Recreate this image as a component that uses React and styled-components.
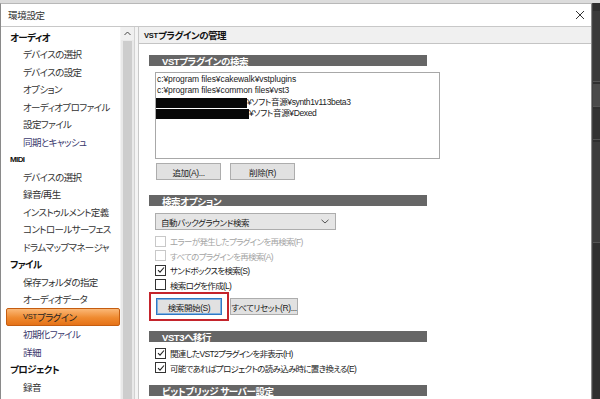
import styled, { createGlobalStyle } from 'styled-components'

const GlobalStyle = createGlobalStyle`
  html, body { margin: 0; padding: 0; background: #2a2a2a; }
  body {
    font-family: "Liberation Sans", "Noto Sans CJK JP", sans-serif;
    font-feature-settings: "palt";
    font-size: 9px;
    color: #222;
  }
`

const Screen = styled.div`
  width: 600px;
  height: 399px;
  overflow: hidden;
  display: flex;
  flex-direction: column;
  background: #2a2a2a;
`
const TopStrip = styled.div`
  height: 3px;
  background: #dcdcdc;
  flex: none;
`
const Row = styled.div`
  flex: 1;
  display: flex;
  min-height: 0;
`
const Dialog = styled.div`
  width: 590px;
  flex: none;
  display: flex;
  flex-direction: column;
  background: #fff;
  border-left: 1px solid #8a8a8a;
  border-right: 1px solid #8a8a8a;
  border-top: 1px solid #b8b8b8;
`
const TitleBar = styled.div`
  height: 22px;
  display: flex;
  align-items: center;
  justify-content: space-between;
  padding: 0 6px 0 7px;
  border-bottom: 1px solid #c8c8c8;
  flex: none;
`
const Title = styled.span`
  font-size: 9.5px;
  letter-spacing: -0.3px;
  color: #333;
`
const Body = styled.div`
  flex: 1;
  display: flex;
  min-height: 0;
`
const Nav = styled.div`
  width: 117px;
  flex: none;
  padding: 1px 0 0 2px;
  background: #fff;
`
const NavItem = styled.div`
  height: 17.5px;
  display: flex;
  align-items: center;
  white-space: nowrap;
  padding-left: ${p => (p.$group ? '7px' : '20px')};
  font-weight: ${p => (p.$group ? 700 : 400)};
  font-size: ${p => (p.$small ? '8px' : '9.5px')};
  letter-spacing: -0.6px;
  color: ${p => (p.$group ? '#111' : p.$navy ? '#3b3a6e' : '#333')};
  ${p => p.$selected && `
    margin: 0 0 0 3px;
    padding-left: 16px;
    border: 1px solid #c55d10;
    border-radius: 2px;
    background: linear-gradient(#fbb877, #ef8a2f 55%, #e57218);
    height: 15.5px;
    color: #222;
  `}
`
const Small = styled.span`
  font-size: 7.5px;
  letter-spacing: -0.2px;
`
const ScrollBar = styled.div`
  width: 13px;
  flex: none;
  display: flex;
  flex-direction: column;
  background: #e9e9e9;
  border-left: 1px solid #f4f4f4;
`
const ScrollArrow = styled.div`
  height: 13px;
  display: flex;
  align-items: center;
  justify-content: center;
  background: #f0f0f0;
`
const ScrollThumb = styled.div`
  flex: 1;
  margin: 1px 2px 0 2px;
  background: #cdcdcd;
`
const Split = styled.div`
  width: 3px;
  flex: none;
  background: #f4f4f4;
  border-left: 1px solid #d2d2d2;
  border-right: 1px solid #c8c8c8;
`
const Main = styled.div`
  flex: 1;
  display: flex;
  flex-direction: column;
  min-width: 0;
`
const MainHeader = styled.div`
  height: 16px;
  display: flex;
  align-items: center;
  padding-left: 5px;
  background: #f0f0f0;
  border-bottom: 1px solid #c4c4c4;
  font-weight: 700;
  font-size: 9.5px;
  letter-spacing: -0.5px;
  color: #111;
  flex: none;
`
const Content = styled.div`
  padding: 11px 0 0 10px;
  display: flex;
  flex-direction: column;
`
const SectionBar = styled.div`
  width: 265px;
  height: 11px;
  margin-top: ${p => p.$top || 0}px;
  padding-left: 13px;
  display: flex;
  align-items: center;
  white-space: nowrap;
  background: #666;
  color: #fff;
  font-weight: 700;
  font-size: 9.5px;
  letter-spacing: -0.4px;
`
const ListBox = styled.div`
  width: 282px;
  height: 84px;
  margin: 6px 0 0 6px;
  border: 1px solid #a8a8a8;
  padding: 1px 0 0 1px;
  font-size: 8.5px;
  line-height: 11.3px;
  letter-spacing: -0.1px;
  color: #222;
`
const ListLine = styled.div`
  display: flex;
  white-space: nowrap;
  letter-spacing: ${p => (p.$tight ? '-0.35px' : '-0.1px')};
`
const Redact = styled.span`
  display: inline-block;
  width: ${p => p.$w}px;
  height: 10px;
  margin: 1px 0 0 -1px;
  background: #080808;
`
const ButtonRow = styled.div`
  display: flex;
  gap: ${p => p.$gap ?? 9}px;
  margin: ${p => p.$margin || '4px 0 0 7px'};
  align-items: center;
`
const Button = styled.div`
  width: ${p => p.$w || 64}px;
  height: 15px;
  display: flex;
  align-items: center;
  justify-content: center;
  white-space: nowrap;
  background: #e1e1e1;
  border: 1px solid ${p => (p.$focus ? '#2f78c4' : '#adadad')};
  box-shadow: ${p => (p.$focus ? 'inset 0 0 0 1px #7fb0e0' : 'none')};
  font-size: 8.5px;
  letter-spacing: -0.4px;
  color: #222;
`
const Highlight = styled.div`
  border: 2px solid #c4242c;
  padding: 4px 5px;
  display: flex;
`
const Select = styled.div`
  box-sizing: border-box;
  width: 181px;
  height: 17px;
  margin: 7px 0 0 6px;
  border: 1px solid #adadad;
  background: #e5e5e5;
  display: flex;
  align-items: center;
  justify-content: space-between;
  padding: 0 6px 0 5px;
  font-size: 8.5px;
  letter-spacing: -0.4px;
  color: #222;
`
const CheckRow = styled.div`
  display: flex;
  align-items: center;
  gap: 4px;
  height: 14.5px;
  margin-left: 6px;
  white-space: nowrap;
  font-size: 8.5px;
  letter-spacing: -0.7px;
  color: ${p => (p.$disabled ? '#a4a4a4' : '#222')};
`
const Box = styled.span`
  width: 9px;
  height: 9px;
  flex: none;
  border: 1px solid ${p => (p.$disabled ? '#c8c8c8' : '#333')};
  background: #fff;
  display: flex;
  align-items: center;
  justify-content: center;
`
const Spacer = styled.div`
  height: ${p => p.$h}px;
`
const Side = styled.div`
  flex: 1;
  display: flex;
  flex-direction: column;
  background: #2f2f2f;
  border-left: 1px solid #444;
  padding-top: 8px;
  gap: 2px;
`
const SideBlock = styled.div`
  height: ${p => p.$h}px;
  background: ${p => p.$bg};
  border-bottom: 1px solid #555;
`

function Check({ checked, disabled, children }) {
  return (
    <CheckRow $disabled={disabled}>
      <Box $disabled={disabled}>
        {checked && (
          <svg width="8" height="8" viewBox="0 0 8 8">
            <path d="M1 4.2 L3 6.2 L7 1.5" fill="none" stroke="#222" strokeWidth="1.1" />
          </svg>
        )}
      </Box>
      {children}
    </CheckRow>
  )
}

const navItems = [
  { t: 'オーディオ', group: true },
  { t: 'デバイスの選択' },
  { t: 'デバイスの設定' },
  { t: 'オプション' },
  { t: 'オーディオプロファイル' },
  { t: '設定ファイル' },
  { t: '同期とキャッシュ', navy: true },
  { t: 'MIDI', group: true, small: true },
  { t: 'デバイスの選択' },
  { t: '録音/再生' },
  { t: 'インストゥルメント定義' },
  { t: 'コントロールサーフェス' },
  { t: 'ドラムマップマネージャ' },
  { t: 'ファイル', group: true },
  { t: '保存フォルダの指定' },
  { t: 'オーディオデータ' },
  { t: 'VSTプラグイン', selected: true },
  { t: '初期化ファイル', navy: true },
  { t: '詳細', navy: true },
  { t: 'プロジェクト', group: true },
  { t: '録音' },
]

export default function App() {
  return (
    <Screen>
      <GlobalStyle />
      <TopStrip />
      <Row>
        <Dialog>
          <TitleBar>
            <Title>環境設定</Title>
            <svg width="10" height="10" viewBox="0 0 10 10">
              <path d="M1 1 L9 9 M9 1 L1 9" stroke="#333" strokeWidth="1" />
            </svg>
          </TitleBar>
          <Body>
            <Nav>
              {navItems.map((n, i) => (
                <NavItem key={i} $group={n.group} $small={n.small} $navy={n.navy} $selected={n.selected}>
                  {n.selected ? <><Small>VST</Small>プラグイン</> : n.t}
                </NavItem>
              ))}
            </Nav>
            <ScrollBar>
              <ScrollArrow>
                <svg width="7" height="5" viewBox="0 0 7 5">
                  <path d="M0.5 4 L3.5 1 L6.5 4" fill="none" stroke="#444" strokeWidth="1" />
                </svg>
              </ScrollArrow>
              <ScrollThumb />
            </ScrollBar>
            <Split />
            <Main>
              <MainHeader><Small>VST</Small>プラグインの管理</MainHeader>
              <Content>
                <SectionBar>VSTプラグインの検索</SectionBar>
                <ListBox>
                  <ListLine>c:¥program files¥cakewalk¥vstplugins</ListLine>
                  <ListLine>c:¥program files¥common files¥vst3</ListLine>
                  <ListLine $tight><Redact $w={91} />¥ソフト音源¥synth1v113beta3</ListLine>
                  <ListLine $tight><Redact $w={93} />¥ソフト音源¥Dexed</ListLine>
                </ListBox>
                <ButtonRow $margin="4px 0 0 7px">
                  <Button $w={63}>追加(A)...</Button>
                  <Button $w={63}>削除(R)</Button>
                </ButtonRow>
                <SectionBar $top={15}>検索オプション</SectionBar>
                <Select>
                  <span>自動バックグラウンド検索</span>
                  <svg width="8" height="5" viewBox="0 0 8 5">
                    <path d="M0.5 0.8 L4 4 L7.5 0.8" fill="none" stroke="#555" strokeWidth="1" />
                  </svg>
                </Select>
                <Spacer $h={4} />
                <Check disabled>エラーが発生したプラグインを再検索(F)</Check>
                <Check disabled>すべてのプラグインを再検索(A)</Check>
                <Check checked>サンドボックスを検索(S)</Check>
                <Check>検索ログを作成(L)</Check>
                <ButtonRow $margin="0" $gap={1}>
                  <Highlight>
                    <Button $w={64} $focus>検索開始(S)</Button>
                  </Highlight>
                  <Button $w={66}>すべてリセット(R)...</Button>
                </ButtonRow>
                <SectionBar $top={10}>VST3へ移行</SectionBar>
                <Spacer $h={4} />
                <Check checked>関連したVST2プラグインを非表示(H)</Check>
                <Check checked>可能であればプロジェクトの読み込み時に置き換える(E)</Check>
                <SectionBar $top={10}>ビットブリッジ サーバー設定</SectionBar>
              </Content>
            </Main>
          </Body>
        </Dialog>
        <Side>
          <SideBlock $h={70} $bg="#3a3a3a" />
          <SideBlock $h={22} $bg="#4a4a4a" />
          <SideBlock $h={30} $bg="#333" />
          <SideBlock $h={100} $bg="#3c3c3c" />
        </Side>
      </Row>
    </Screen>
  )
}
